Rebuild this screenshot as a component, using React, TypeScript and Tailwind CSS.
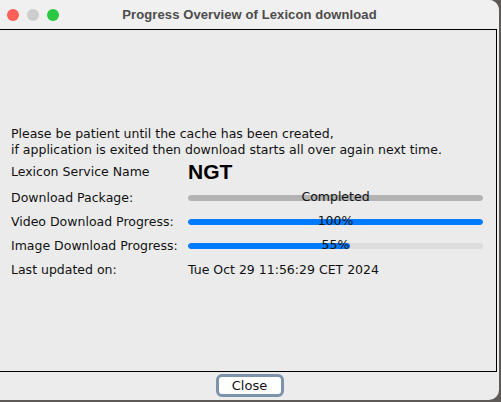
import React from 'react';

const titleFont = { fontFamily: '"Liberation Sans", Arial, sans-serif' };
const bodyFont = { fontFamily: '"DejaVu Sans", Verdana, sans-serif' };

const ProgressBar = ({ value, label, color }: { value: number; label: string; color: 'gray' | 'blue' }) => (
  <div className="relative w-[295px] h-[24px] flex items-center">
    <div className="w-full h-[6px] rounded-full bg-[#dcdcdc] overflow-hidden">
      <div
        className={`h-full rounded-full ${color === 'gray' ? 'bg-[#b3b3b3]' : 'bg-[#007aff]'}`}
        style={{ width: `${value}%` }}
      />
    </div>
    <span className="absolute inset-x-0 top-[3px] text-center text-[12.5px] leading-[16px] text-[#111]">{label}</span>
  </div>
);

export default function App() {
  return (
    <div className="w-[501px] h-[402px] bg-[#5e5a58] overflow-hidden" style={bodyFont}>
      <div className="w-[499px] h-[400px] bg-[#ececec] rounded-tr-[10px] rounded-br-[10px] flex flex-col overflow-hidden">
        {/* title bar */}
        <div className="relative h-[29px] shrink-0 bg-[#f0f0f0] flex items-center justify-center">
          <div className="absolute left-[7px] top-[9px] flex gap-[8px]">
            <span className="w-[12px] h-[12px] rounded-full bg-[#ff5f57]" />
            <span className="w-[12px] h-[12px] rounded-full bg-[#cdcdcd]" />
            <span className="w-[12px] h-[12px] rounded-full bg-[#28c840]" />
          </div>
          <span className="text-[13px] font-bold text-[#4b4b4b] pt-[1px] tracking-[0.1px]" style={titleFont}>
            Progress Overview of Lexicon download
          </span>
        </div>

        {/* content panel */}
        <div className="h-[343px] shrink-0 w-[498px] -ml-px border border-black bg-[#ebebeb] pl-[11px] pt-[96px] text-[12.5px] leading-[16px] text-[#111]">
          <p>Please be patient until the cache has been created,</p>
          <p>if application is exited then download starts all over again next time.</p>

          <div className="grid grid-cols-[177px_1fr]">
            <div className="h-[28px] flex items-center">Lexicon Service Name</div>
            <div className="h-[28px] flex items-center text-[21px] leading-[24px] font-bold text-black" style={titleFont}>NGT</div>

            <div className="h-[24px] flex items-center">Download Package:</div>
            <ProgressBar value={100} label="Completed" color="gray" />

            <div className="h-[24px] flex items-center">Video Download Progress:</div>
            <ProgressBar value={100} label="100%" color="blue" />

            <div className="h-[24px] flex items-center">Image Download Progress:</div>
            <ProgressBar value={55} label="55%" color="blue" />

            <div className="h-[23px] flex items-center">Last updated on:</div>
            <div className="h-[23px] flex items-center">Tue Oct 29 11:56:29 CET 2024</div>
          </div>
        </div>

        {/* footer */}
        <div className="flex-1 flex justify-center pt-[2px]">
          <button className="w-[68px] h-[23px] bg-white border-[3px] border-[#7d93ab] rounded-[6px] text-[13px] leading-[16px] text-[#111]">
            Close
          </button>
        </div>
      </div>
    </div>
  );
}
